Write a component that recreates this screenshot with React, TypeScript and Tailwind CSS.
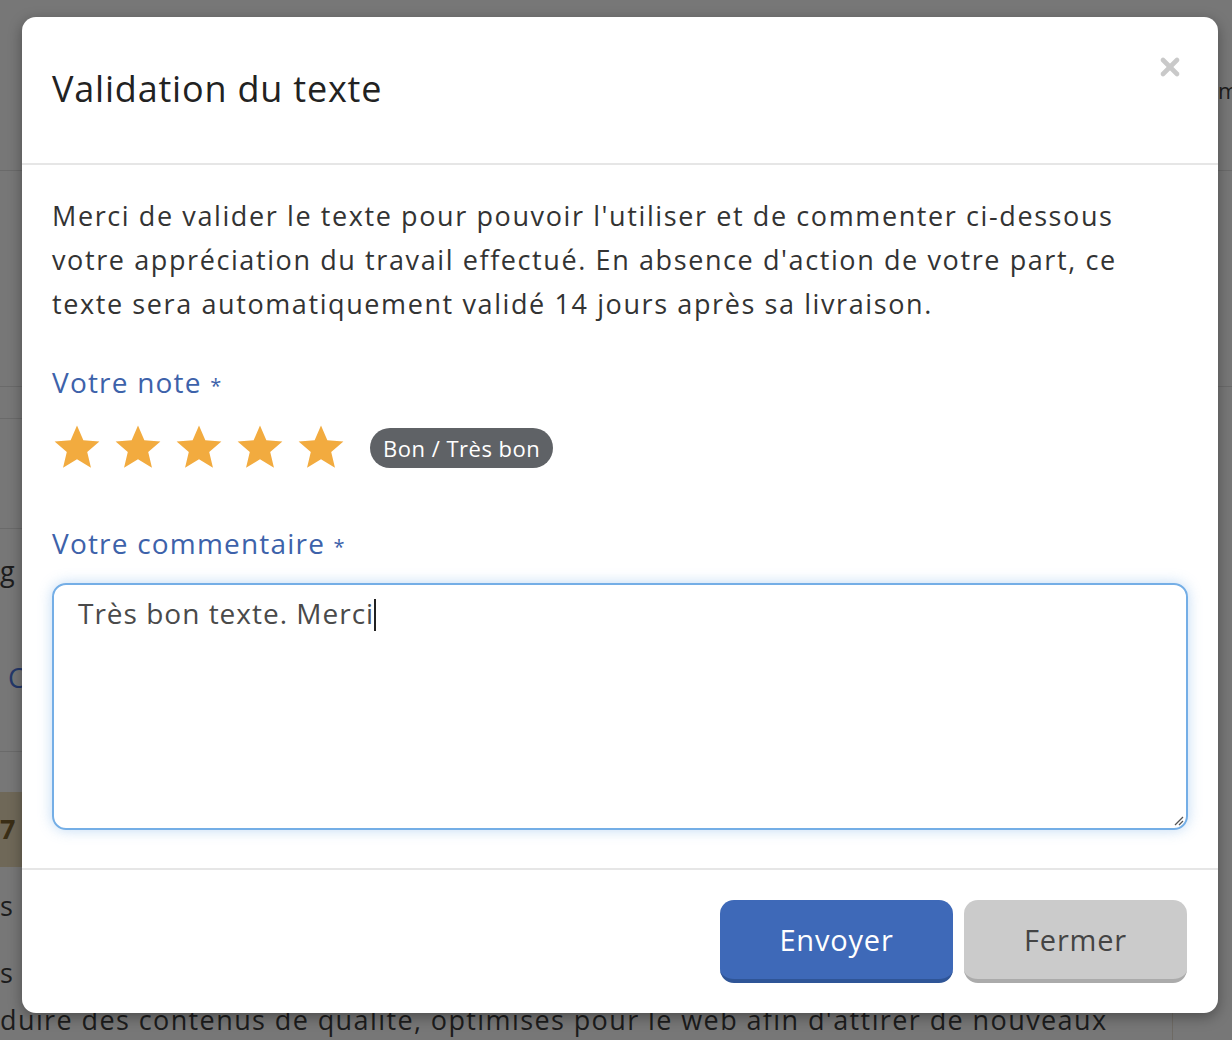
import { X } from "lucide-react";

const font = { fontFamily: "'Open Sans', Lato, sans-serif" };

const Star = () => (
  <svg viewBox="0 0 24 24" className="w-[50px] h-[50px]" fill="#f2ab3f">
    <path d="M12 1.2l3.05 7.1 7.7.6-5.85 5.05 1.8 7.5L12 17.4l-6.7 4.05 1.8-7.5L1.25 8.9l7.7-.6z" />
  </svg>
);

const BackgroundPage = () => (
  <div className="absolute inset-0 bg-[#777777] text-[#1c1c1c] text-[27px] overflow-hidden">
    {/* page behind the overlay, dimmed */}
    <div className="absolute left-0 right-0 top-[170px] h-px bg-[#6a6a6a]" />
    <div className="absolute left-0 right-0 top-[386px] h-px bg-[#6a6a6a]" />
    <div className="absolute left-0 w-[30px] top-[418px] h-px bg-[#6a6a6a]" />
    <div className="absolute left-0 w-[30px] top-[528px] h-px bg-[#6a6a6a]" />
    <div className="absolute left-0 w-[30px] top-[751px] h-px bg-[#6a6a6a]" />
    <div className="absolute left-[1172px] top-[980px] bottom-0 w-px bg-[#6e6a64]" />
    <div className="absolute left-0 top-[553px] leading-[36px]">g</div>
    <div className="absolute left-[8px] top-[660px] leading-[36px] text-[#24386a]">C</div>
    <div className="absolute left-0 w-[30px] top-[792px] h-[75px] bg-[#6f6858] flex items-center font-bold text-[#3a2e16]">
      <span>7</span>
    </div>
    <div className="absolute left-0 top-[888px] leading-[36px]">s</div>
    <div className="absolute left-0 top-[955px] leading-[36px]">s</div>
    <div className="absolute left-[1218px] top-[72px] leading-[36px] text-[22px]">m</div>
    <div className="absolute left-0 top-[1000px] leading-[40px] whitespace-nowrap tracking-[1.4px]">
      duire des contenus de qualité, optimisés pour le web afin d'attirer de nouveaux
    </div>
  </div>
);

export default function App() {
  return (
    <div className="relative w-[1232px] h-[1040px] overflow-hidden" style={font}>
      <BackgroundPage />

      <div className="absolute left-[22px] top-[17px] w-[1196px] h-[996px] bg-white rounded-[14px] shadow-[0_4px_14px_rgba(0,0,0,0.35)] flex flex-col">
        <div className="relative h-[149px] flex items-center px-[30px] pb-[2px] border-b-2 border-[#e6e6e6]">
          <h2 className="text-[36px] tracking-[0.8px] text-[#222]">Validation du texte</h2>
          <button className="absolute right-[34px] top-[36px] text-[#c9c9c9]">
            <X className="w-[28px] h-[28px]" strokeWidth={4} />
          </button>
        </div>

        <div className="flex-1 flex flex-col px-[30px] pt-[29px] pb-[38px] border-b-2 border-[#e6e6e6]">
          <p className="text-[27px] tracking-[1.6px] leading-[44px] text-[#333] max-w-[1090px]">
            Merci de valider le texte pour pouvoir l'utiliser et de commenter ci-dessous votre appréciation du travail effectué. En absence d'action de votre part, ce texte sera automatiquement validé 14 jours après sa livraison.
          </p>

          <div className="mt-[36px] text-[28px] tracking-[1.2px] leading-[40px] text-[#3d62aa]">
            Votre note <span className="text-[20px]">*</span>
          </div>
          <div className="mt-[17px] flex items-center">
            <div className="flex gap-[11px]">
              <Star />
              <Star />
              <Star />
              <Star />
              <Star />
            </div>
            <span className="ml-[24px] h-[40px] px-[13px] flex items-center rounded-full bg-[#5f6266] text-white text-[22px] tracking-[0.5px]">
              Bon / Très bon
            </span>
          </div>

          <div className="mt-[50px] text-[28px] tracking-[1.2px] leading-[40px] text-[#3d62aa]">
            Votre commentaire <span className="text-[20px]">*</span>
          </div>
          <div className="relative mt-[16px] h-[247px] w-full rounded-[14px] border-2 border-[#74aee6] shadow-[0_0_14px_rgba(116,174,230,0.45)] px-[24px] py-[8px] text-[28px] tracking-[1px] leading-[40px] text-[#4a4a4a]">
            Très bon texte. Merci
            <span className="inline-block align-middle w-[2px] h-[32px] bg-[#222] -mt-[4px]" />
            <svg className="absolute right-[2px] bottom-[2px] w-[12px] h-[12px]" viewBox="0 0 12 12" stroke="#555" strokeWidth="1.3">
              <path d="M11 3L3 11M11 7L7 11" />
            </svg>
          </div>
        </div>

        <div className="h-[144px] flex items-center justify-end gap-[11px] px-[31px]">
          <button className="w-[233px] h-[83px] rounded-[14px] bg-[#3e69b8] border-b-[4px] border-[#2f5597] text-white text-[29px] tracking-[0.8px]">
            Envoyer
          </button>
          <button className="w-[223px] h-[83px] rounded-[14px] bg-[#cbcbcb] border-b-[4px] border-[#ababab] text-[#444] text-[29px] tracking-[0.8px]">
            Fermer
          </button>
        </div>
      </div>
    </div>
  );
}
